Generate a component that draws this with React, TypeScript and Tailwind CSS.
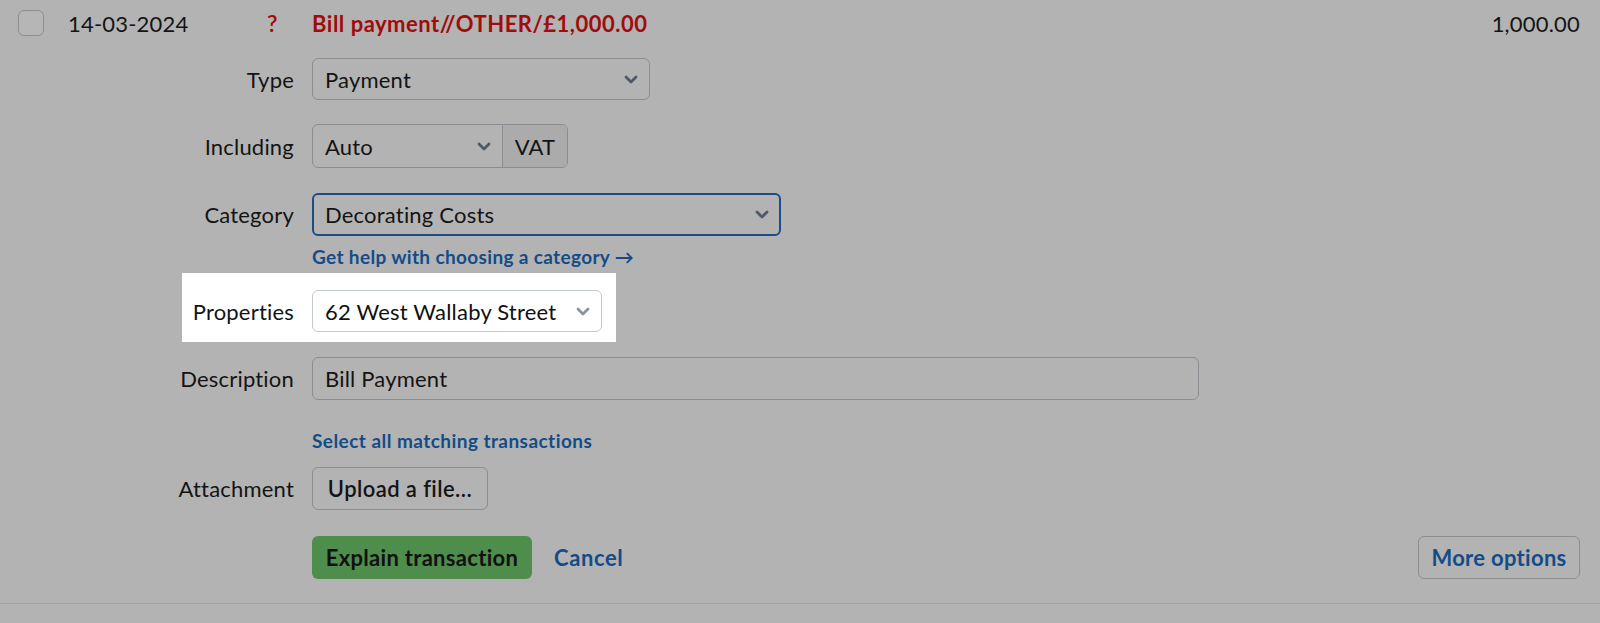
import React from "react";

const Chevron = ({ color = "#4f5965" }: { color?: string }) => (
  <svg width="14" height="9" viewBox="0 0 14 9" className="shrink-0">
    <path d="M2 2 L7 7 L12 2" fill="none" stroke={color} strokeWidth="2.8" strokeLinecap="round" strokeLinejoin="round" />
  </svg>
);

const Label = ({ children, w = "w-[312px]" }: { children: React.ReactNode; w?: string }) => (
  <div className={`${w} shrink-0 pr-[18px] text-right text-[22px] tracking-[0.2px] text-[#141414]`}>{children}</div>
);

export default function App() {
  return (
    <div
      className="w-[1600px] h-[623px] bg-[#b3b3b3] overflow-hidden text-[#141414]"
      style={{ fontFamily: "Lato, 'Open Sans', sans-serif" }}
    >
      {/* header row */}
      <div className="flex items-center h-[46px] pl-[18px] pr-[20px]">
        <div className="w-[26px] h-[26px] rounded-[6px] border-[1.5px] border-[#8c8f93] bg-[#b6b6b6]" />
        <div className="ml-[24px] w-[199px] text-[22px] tracking-[0.2px]">14-03-2024</div>
        <div className="w-[45px] text-[23px] font-semibold text-[#a10b0b]">?</div>
        <div className="text-[22px] font-bold tracking-[0.5px] text-[#a10b0b]">Bill payment//OTHER/£1,000.00</div>
        <div className="ml-auto text-[22px] tracking-[0.2px]">1,000.00</div>
      </div>

      {/* Type */}
      <div className="flex items-center mt-[12px]">
        <Label>Type</Label>
        <div className="w-[338px] h-[42px] rounded-[6px] border border-[#8a8e93] flex items-center justify-between pl-[12px] pr-[11px] text-[22px] tracking-[0.2px]">
          <span>Payment</span>
          <Chevron />
        </div>
      </div>

      {/* Including */}
      <div className="flex items-center mt-[24px]">
        <Label>Including</Label>
        <div className="h-[44px] rounded-[6px] border border-[#8a8e93] flex text-[22px] tracking-[0.2px] overflow-hidden">
          <div className="w-[189px] flex items-center justify-between pl-[12px] pr-[11px]">
            <span>Auto</span>
            <Chevron />
          </div>
          <div className="w-[65px] border-l border-[#8a8e93] bg-[#ababab] flex items-center justify-center">VAT</div>
        </div>
      </div>

      {/* Category */}
      <div className="flex items-center mt-[25px]">
        <Label>Category</Label>
        <div className="w-[469px] h-[43px] rounded-[6px] border-2 border-[#1a4d86] flex items-center justify-between pl-[11px] pr-[10px] text-[22px] tracking-[0.2px]">
          <span>Decorating Costs</span>
          <Chevron />
        </div>
      </div>
      <div className="pl-[312px] mt-[9px] text-[19px] font-bold tracking-[0.35px] text-[#144c88] leading-[24px]">
        Get help with choosing a category →
      </div>

      {/* Properties (highlighted) */}
      <div className="ml-[182px] mt-[4px] w-[434px] bg-white flex items-center pt-[17px] pb-[10px]">
        <Label w="w-[130px]">Properties</Label>
        <div className="w-[290px] h-[42px] rounded-[6px] border border-[#c3c9d0] flex items-center justify-between pl-[12px] pr-[11px] text-[22px] tracking-[0.2px] text-[#111]">
          <span>62 West Wallaby Street</span>
          <Chevron color="#8c939b" />
        </div>
      </div>

      {/* Description */}
      <div className="flex items-center mt-[15px]">
        <Label>Description</Label>
        <div className="w-[887px] h-[43px] rounded-[6px] border border-[#8a8e93] flex items-center pl-[12px] text-[22px] tracking-[0.2px]">
          Bill Payment
        </div>
      </div>
      <div className="pl-[312px] mt-[29px] text-[19px] font-bold tracking-[0.45px] text-[#144c88] leading-[24px]">
        Select all matching transactions
      </div>

      {/* Attachment */}
      <div className="flex items-center mt-[14px]">
        <Label>Attachment</Label>
        <div className="w-[176px] h-[43px] rounded-[6px] border border-[#8a8e93] flex items-center justify-center text-[22px] font-semibold tracking-[0.4px]">
          Upload a file…
        </div>
      </div>

      {/* Actions */}
      <div className="flex items-center mt-[26px] pr-[20px]">
        <div className="w-[312px] shrink-0" />
        <div className="w-[220px] h-[43px] rounded-[6px] bg-[#4f8d4c] flex items-center justify-center text-[22px] font-bold tracking-[0.3px] text-[#111]">
          Explain transaction
        </div>
        <div className="ml-[22px] text-[22px] font-bold tracking-[0.6px] text-[#144c88]">Cancel</div>
        <div className="ml-auto w-[162px] h-[43px] rounded-[6px] border border-[#8a8e93] flex items-center justify-center text-[22px] font-bold tracking-[0.3px] text-[#144c88]">
          More options
        </div>
      </div>

      <div className="mt-[24px] h-px bg-[#9da1a6]" />
    </div>
  );
}
